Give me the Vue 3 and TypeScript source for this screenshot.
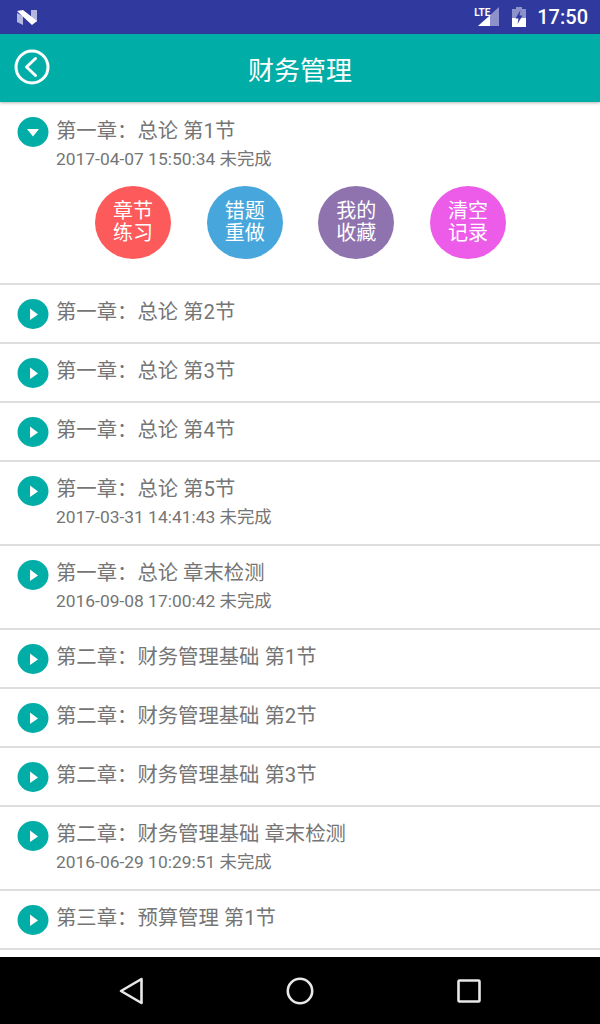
<template>
  <div class="page">
    <!-- 状态栏 -->
    <div class="status-bar">
      <svg class="n-logo" width="22" height="17" viewBox="0 0 22 17">
        <path d="M1 4 L7 7 V16 L1 13 Z" fill="#b4b8e0" />
        <path d="M15 1 L21 1 V13 L15 9 Z" fill="#b4b8e0" />
        <path d="M1 2 L7 1 L21 12 L16 16 Z" fill="#ffffff" />
      </svg>
      <div class="status-right">
        <div class="signal">
          <span class="lte">LTE</span>
          <svg width="22" height="20" viewBox="0 0 22 20">
            <path d="M21 0 V19 H0 Z" fill="#8d92cc" />
            <path d="M12 8.5 V19 H0 Z" fill="#ffffff" />
          </svg>
        </div>
        <svg class="battery" width="14" height="20" viewBox="0 0 14 20">
          <path d="M4 0 H10 V2 H14 V20 H0 V2 H4 Z" fill="#8d92cc" />
          <path d="M0 11 H14 V20 H0 Z" fill="#ffffff" />
          <path d="M8.5 3 L3.5 11.5 H6.5 L5.5 17 L10.5 8.5 H7.5 Z" fill="#303a9e" />
        </svg>
        <span class="clock">17:50</span>
      </div>
    </div>

    <!-- 标题栏 -->
    <div class="toolbar">
      <svg class="back" width="36" height="36" viewBox="0 0 36 36" fill="none" stroke="#fff">
        <circle cx="18" cy="18" r="16" stroke-width="3" />
        <path d="M21.5 9.5 L12.5 18 L21.5 26.5" stroke-width="3" stroke-linecap="round" stroke-linejoin="round" />
      </svg>
      <span class="toolbar-title">财务管理</span>
    </div>

    <!-- 章节列表 -->
    <div class="list">
      <div v-for="(item, index) in sections" :key="index" class="row" :class="{ timed: item.time }">
        <div class="row-main">
          <svg class="arrow" width="32" height="30" viewBox="0 0 32 30">
            <ellipse cx="16" cy="15" rx="15.5" ry="15" fill="#00ada7" />
            <path v-if="item.open" d="M10 12 H22 L16 19.5 Z" fill="#fff" />
            <path v-else d="M13 9.5 L21 15.5 L13 21 Z" fill="#fff" />
          </svg>
          <div class="row-text">
            <div class="row-title">{{ item.title }}</div>
            <div v-if="item.time" class="row-time">{{ item.time }} 未完成</div>
          </div>
        </div>
        <div v-if="item.open" class="actions">
          <div v-for="action in actions" :key="action.label" class="action" :style="{ background: action.color }">
            {{ action.label }}
          </div>
        </div>
      </div>
    </div>

    <!-- 导航栏 -->
    <div class="nav-bar">
      <svg width="24" height="28" viewBox="0 0 24 28" fill="none" stroke="#e8e8e8" stroke-width="2.6" stroke-linejoin="round">
        <path d="M22.5 2 V26 L2 14 Z" />
      </svg>
      <svg width="28" height="28" viewBox="0 0 28 28" fill="none" stroke="#e8e8e8" stroke-width="2.6">
        <circle cx="14" cy="14" r="12.2" />
      </svg>
      <svg width="24" height="24" viewBox="0 0 24 24" fill="none" stroke="#e8e8e8" stroke-width="2.6" stroke-linejoin="round">
        <rect x="1.5" y="1.5" width="21" height="21" rx="1" />
      </svg>
    </div>
  </div>
</template>

<script setup lang="ts">
interface Section {
  title: string
  time?: string
  open?: boolean
}

const sections: Section[] = [
  { title: '第一章：总论 第1节', time: '2017-04-07 15:50:34', open: true },
  { title: '第一章：总论 第2节' },
  { title: '第一章：总论 第3节' },
  { title: '第一章：总论 第4节' },
  { title: '第一章：总论 第5节', time: '2017-03-31 14:41:43' },
  { title: '第一章：总论 章末检测', time: '2016-09-08 17:00:42' },
  { title: '第二章：财务管理基础 第1节' },
  { title: '第二章：财务管理基础 第2节' },
  { title: '第二章：财务管理基础 第3节' },
  { title: '第二章：财务管理基础 章末检测', time: '2016-06-29 10:29:51' },
  { title: '第三章：预算管理 第1节' }
]

const actions = [
  { label: '章节练习', color: '#fd5b5b' },
  { label: '错题重做', color: '#47a7dc' },
  { label: '我的收藏', color: '#8f73ae' },
  { label: '清空记录', color: '#ec5ce8' }
]
</script>

<style scoped>
.page {
  width: 600px;
  height: 1024px;
  display: flex;
  flex-direction: column;
  overflow: hidden;
  background: #fff;
  font-family: Roboto, "Noto Sans CJK SC", sans-serif;
}

.status-bar {
  height: 34px;
  flex: none;
  background: #303a9e;
  display: flex;
  align-items: center;
  justify-content: space-between;
  padding: 0 12px 0 16px;
  box-sizing: border-box;
}

.status-right {
  display: flex;
  align-items: center;
}

.signal {
  position: relative;
  width: 26px;
  height: 20px;
  display: flex;
  justify-content: flex-end;
}

.lte {
  position: absolute;
  left: 0;
  top: 0;
  font-size: 10px;
  line-height: 11px;
  font-weight: 700;
  color: #fff;
}

.battery {
  margin-left: 12px;
}

.clock {
  margin-left: 11px;
  font-size: 20px;
  font-weight: 500;
  color: #fff;
}

.toolbar {
  height: 68px;
  flex: none;
  position: relative;
  z-index: 1;
  background: #00ada7;
  box-shadow: 0 1px 3px rgba(0, 0, 0, 0.3);
  display: flex;
  align-items: center;
  justify-content: center;
}

.back {
  position: absolute;
  left: 14px;
  top: 15px;
}

.toolbar-title {
  font-size: 26px;
  color: #fff;
}

.list {
  flex: 1;
  min-height: 0;
  overflow: hidden;
}

.row {
  border-bottom: 2px solid #dedede;
  box-sizing: border-box;
  height: 59px;
  padding-top: 14px;
}

.row.timed {
  height: 84px;
}

.row:first-child {
  height: 183px;
  padding-top: 15px;
}

.row-text {
  margin-top: -1px;
}

.row:first-child .row-text {
  margin-top: 0;
}

.row-main {
  display: flex;
  align-items: flex-start;
  padding-left: 17px;
}

.arrow {
  flex: none;
  margin-right: 7px;
}

.row-title {
  font-size: 20.35px;
  line-height: 28px;
  color: #757575;
}

.row-time {
  font-size: 17.4px;
  line-height: 28px;
  color: #757575;
}

.actions {
  display: flex;
  gap: 35.67px;
  padding: 13px 0 0 95px;
}

.action {
  width: 76px;
  height: 73px;
  flex: none;
  border-radius: 50%;
  padding: 14px 18px 0;
  box-sizing: border-box;
  color: #fff;
  font-size: 20px;
  line-height: 22px;
  text-align: center;
}

.nav-bar {
  height: 67px;
  flex: none;
  background: #000;
  display: flex;
  align-items: center;
  justify-content: space-between;
  padding: 0 119px;
}
</style>
